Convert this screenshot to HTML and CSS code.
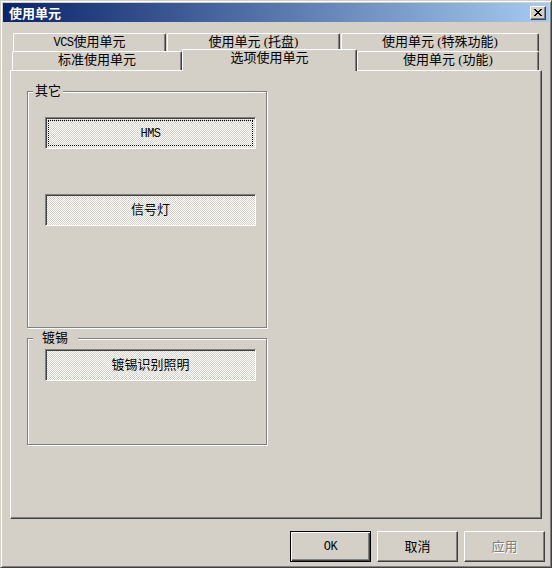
FILE: index.html
```html
<!DOCTYPE html>
<html lang="zh-CN">
<head>
<meta charset="utf-8">
<title>使用单元</title>
<link rel="stylesheet" href="styles.css">
</head>
<body>
<div class="window">
  <div class="titlebar">
    <span class="title">使用单元</span>
    <button class="close" type="button" aria-label="关闭">
      <svg width="8" height="7" viewBox="0 0 8 7"><path fill="#000" d="M0 0h2v1H0z M6 0h2v1H6z M1 1h2v1H1z M5 1h2v1H5z M2 2h4v1H2z M3 3h2v1H3z M2 4h4v1H2z M1 5h2v1H1z M5 5h2v1H5z M0 6h2v1H0z M6 6h2v1H6z"/></svg>
    </button>
  </div>
  <div class="client">
    <div class="tabs">
      <div class="tab-row back">
        <div class="tab w-vcs"><span class="ascii">VCS</span>使用单元</div>
        <div class="tab w-tray">使用单元 (托盘)</div>
        <div class="tab w-special">使用单元 (特殊功能)</div>
      </div>
      <div class="tab-row front">
        <div class="tab w-std">标准使用单元</div>
        <div class="tab selected w-opt">选项使用单元</div>
        <div class="tab w-func">使用单元 (功能)</div>
      </div>
    </div>
    <div class="panel">
      <fieldset class="group g1">
        <legend>其它</legend>
        <button class="toggle focus first" type="button"><span class="ascii">HMS</span></button>
        <button class="toggle second" type="button">信号灯</button>
      </fieldset>
      <fieldset class="group g2">
        <legend>镀锡</legend>
        <button class="toggle third" type="button">镀锡识别照明</button>
      </fieldset>
    </div>
    <div class="actions">
      <button class="btn default" type="button"><span class="ascii">OK</span></button>
      <button class="btn" type="button">取消</button>
      <button class="btn" type="button" disabled>应用</button>
    </div>
  </div>
</div>
</body>
</html>
```
FILE: styles.css
```css
* { box-sizing: border-box; }
html, body { margin: 0; padding: 0; }
body {
  width: 552px;
  height: 568px;
  overflow: hidden;
  background: #d4d0c8;
  color: #000;
  font: 13px/16px "Liberation Serif", "Noto Sans CJK SC", serif;
}
.ascii {
  font-family: "Liberation Mono", monospace;
  font-size: 12px;
  letter-spacing: -0.5px;
}
.window {
  width: 552px;
  height: 568px;
  border: 1px solid;
  border-color: #d4d0c8 #404040 #404040 #d4d0c8;
  box-shadow: inset 1px 1px #fff, inset -1px -1px #808080;
  padding: 2px;
  display: flex;
  flex-direction: column;
}
.titlebar {
  flex: none;
  height: 19px;
  display: flex;
  align-items: center;
  justify-content: space-between;
  padding: 0 3px 0 6px;
  background: linear-gradient(to right, #0a246a, #a6caf0);
}
.title {
  color: #fff;
  font-weight: bold;
  font-family: "Noto Sans CJK SC", sans-serif;
  font-size: 13px;
  line-height: 15px;
}
.close {
  width: 16px;
  height: 14px;
  padding: 0;
  border: 1px solid;
  border-color: #fff #404040 #404040 #fff;
  box-shadow: inset -1px -1px #808080;
  background: #d4d0c8;
  display: flex;
  align-items: center;
  justify-content: center;
}
.close svg { display: block; }
.client {
  flex: 1;
  display: flex;
  flex-direction: column;
  padding: 11px 0 0 7px;
}
.tab-row { display: flex; height: 18px; }
.tab-row.back { margin-left: 3px; gap: 1px; }
.tab-row.front { margin-left: 2px; height: 19px; }
.tab {
  height: 100%;
  border-top: 1px solid #fff;
  border-left: 1px solid #fff;
  border-right: 1px solid #404040;
  box-shadow: inset -1px 0 #808080;
  border-radius: 2px 2px 0 0;
  background: #d4d0c8;
  text-align: center;
  line-height: 16px;
  white-space: nowrap;
}
.w-vcs { width: 153px; }
.w-tray { width: 173px; }
.w-special { width: 198px; }
.w-std { width: 170px; }
.w-opt { width: 175px; }
.w-func { width: 182px; }
.tab.selected {
  position: relative;
  z-index: 1;
  margin-top: -2px;
  height: 22px;
}
.panel {
  flex: none;
  width: 532px;
  height: 449px;
  border: 1px solid;
  border-color: #fff #404040 #404040 #fff;
  box-shadow: inset -1px -1px #808080;
  padding: 13px 0 0 16px;
}
.group {
  width: 240px;
  margin: 0;
  padding: 0;
  border: 1px solid #808080;
  box-shadow: inset 1px 1px #fff, 1px 1px #fff;
  min-width: 0;
}
.group legend {
  margin-left: 5px;
  padding: 0 2px;
  line-height: 14px;
  background: #d4d0c8;
}
.g2 legend { padding: 0 10px 0 9px; }
.g1 { height: 244px; }
.g2 { height: 114px; margin-top: 3px; }
.toggle {
  display: block;
  width: 211px;
  height: 32px;
  margin-left: 17px;
  padding: 0;
  border: 1px solid;
  border-color: #808080 #fff #fff #808080;
  box-shadow: inset 1px 1px #404040;
  background-color: #fff;
  background-image: conic-gradient(#d4d0c8 25%, #fff 0 50%, #d4d0c8 0 75%, #fff 0);
  background-size: 2px 2px;
  font: inherit;
  color: #000;
  text-align: center;
}
.toggle.focus { outline: 1px dotted #000; outline-offset: -4px; }
.toggle.first { margin-top: 19px; }
.toggle.second { margin-top: 45px; }
.toggle.third { margin-top: 4px; }
.actions {
  display: flex;
  justify-content: flex-end;
  gap: 6px;
  margin-top: 12px;
  padding-right: 4px;
}
.btn {
  width: 81px;
  height: 31px;
  padding: 0;
  border: 1px solid;
  border-color: #fff #404040 #404040 #fff;
  box-shadow: inset -1px -1px #808080;
  background: #d4d0c8;
  font: inherit;
  color: #000;
}
.btn.default {
  border-color: #000;
  box-shadow: inset 1px 1px #fff, inset -1px -1px #404040, inset -2px -2px #808080;
}
.btn:disabled { color: #808080; text-shadow: 1px 1px #fff; }
```
